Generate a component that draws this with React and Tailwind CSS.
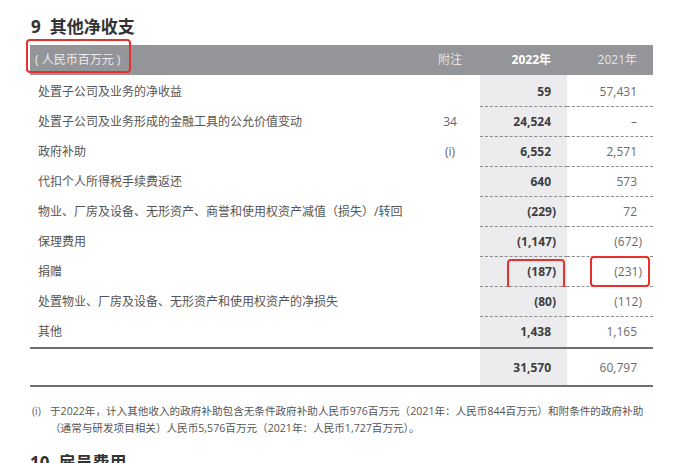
const rows = [
  { label: '处置子公司及业务的净收益', note: '', cur: '59', prev: '57,431' },
  { label: '处置子公司及业务形成的金融工具的公允价值变动', note: '34', cur: '24,524', prev: '–' },
  { label: '政府补助', note: '(i)', cur: '6,552', prev: '2,571' },
  { label: '代扣个人所得税手续费返还', note: '', cur: '640', prev: '573' },
  { label: '物业、厂房及设备、无形资产、商誉和使用权资产减值（损失）/转回', note: '', cur: '(229)', prev: '72' },
  { label: '保理费用', note: '', cur: '(1,147)', prev: '(672)' },
  { label: '捐赠', note: '', cur: '(187)', prev: '(231)', marked: true },
  { label: '处置物业、厂房及设备、无形资产和使用权资产的净损失', note: '', cur: '(80)', prev: '(112)' },
  { label: '其他', note: '', cur: '1,438', prev: '1,165', last: true },
];

const Num = ({ value }) => {
  const neg = value.startsWith('(');
  return <span className={neg ? '-mr-[5px]' : ''}>{value}</span>;
};

const RedBox = ({ className }) => (
  <div className={`absolute border-2 border-[#e8302c] rounded-[4px] pointer-events-none ${className}`} />
);

export default function App() {
  return (
    <div className="w-[688px] h-[463px] overflow-hidden bg-white font-['Open_Sans','Noto_Sans_CJK_SC',sans-serif]">
      <div className="ml-[30px] w-[623px] pt-[16px]">
        <h2 className="flex gap-[9px] text-[17px] leading-[22px] font-bold text-[#333]">
          <span className="pl-[1px]">9</span>
          <span>其他净收支</span>
        </h2>

        {/* header */}
        <div className="mt-[7px] grid grid-cols-[390px_60px_87px_86px] h-[30px] items-center bg-[#939598] text-[12px]">
          <div className="relative pl-[5px] text-[#ececec]">
            ( 人民币百万元 )
            <RedBox className="-left-[4px] -top-[12px] w-[105px] h-[34px]" />
          </div>
          <div className="text-center text-[#e4e4e4]">附注</div>
          <div className="text-right pr-[16px] font-bold text-white">2022年</div>
          <div className="text-right pr-[16px] text-[#e4e4e4]">2021年</div>
        </div>
        <div className="grid grid-cols-[390px_60px_87px_86px] h-[2px]">
          <div />
          <div />
          <div className="bg-[#ececee]" />
          <div />
        </div>

        {rows.map((r) => (
          <div key={r.label} className="grid grid-cols-[390px_60px_87px_86px] h-[30px] text-[12px]">
            <div className="flex items-center pl-[8px] text-[#555] whitespace-nowrap">{r.label}</div>
            <div className="flex items-center justify-center text-[#666]">{r.note}</div>
            <div
              className={`relative flex items-center justify-end pr-[16px] bg-[#ececee] font-bold text-[#3d3d3d] ${
                r.last ? '' : 'border-b border-dashed border-[#8c8c8c]'
              }`}
            >
              <Num value={r.cur} />
              {r.marked && <RedBox className="left-[27px] top-[2px] w-[58px] h-[30px]" />}
            </div>
            <div
              className={`relative flex items-center justify-end pr-[16px] text-[#6b6b6b] ${
                r.last ? '' : 'border-b border-dashed border-[#8c8c8c]'
              }`}
            >
              <Num value={r.prev} />
              {r.marked && <RedBox className="left-[23px] -top-[1px] w-[60px] h-[31px]" />}
            </div>
          </div>
        ))}

        <div className="h-[2px] bg-[#707070]" />
        <div className="grid grid-cols-[390px_60px_87px_86px] h-[36px] text-[12px]">
          <div />
          <div />
          <div className="flex items-center justify-end pt-[2px] pr-[16px] bg-[#ececee] font-bold text-[#3d3d3d]">31,570</div>
          <div className="flex items-center justify-end pt-[2px] pr-[16px] text-[#6b6b6b]">60,797</div>
        </div>
        <div className="h-[2px] bg-[#707070]" />

        <div className="mt-[16px] flex text-[10.6px] leading-[17px] text-[#555]">
          <span className="w-[20px] pl-[2px] shrink-0 text-[#5a6275]">(i)</span>
          <p className="whitespace-nowrap">
            于2022年，计入其他收入的政府补助包含无条件政府补助人民币976百万元（2021年：人民币844百万元）和附条件的政府补助
            <br />
            （通常与研发项目相关）人民币5,576百万元（2021年：人民币1,727百万元）。
          </p>
        </div>

        <h2 className="mt-[15px] flex gap-[9px] text-[17px] leading-[22px] font-bold text-[#333]">
          <span>10</span>
          <span>雇员费用</span>
        </h2>
      </div>
    </div>
  );
}
